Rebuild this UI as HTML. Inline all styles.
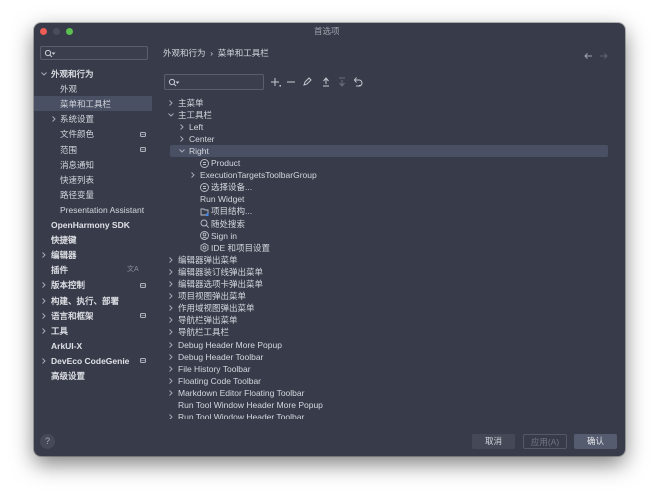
<!DOCTYPE html>
<html><head><meta charset="utf-8"><style>
*{margin:0;padding:0;box-sizing:border-box}
body{width:660px;height:501px;background:#fff;position:relative;overflow:hidden;font-family:"Liberation Sans","Noto Sans CJK SC",sans-serif;font-size:8.5px;color:#d4d7de}
.win{position:absolute;left:34px;top:23px;width:591px;height:433px;background:#383c4a;border-radius:7px;box-shadow:0 8px 22px rgba(0,0,0,.5),0 0 0 1px rgba(0,0,0,.25)}
.dot{position:absolute;top:5px;width:7px;height:7px;border-radius:50%}
.t{position:absolute;white-space:nowrap;line-height:12px}
.chev{position:absolute}
.hl{position:absolute;background:#4a5064;border-radius:2px}
.ic{position:absolute}
.btn{position:absolute;top:411px;height:15px;border-radius:2px;text-align:center;line-height:15px;font-size:8.5px}
</style></head><body>
<div class="win">
<div class="dot" style="left:6px;background:#ee5c56"></div>
<div class="dot" style="left:19px;background:#4a4e5a"></div>
<div class="dot" style="left:32px;background:#5ac04f"></div>
<div class="t" style="left:280px;top:2px;color:#9ea3ad">首选项</div>

<div style="position:absolute;left:6px;top:23px;width:108px;height:14px;border:1px solid #5a5f6e;border-radius:2px;background:#3b3f4d"></div>
<svg class="ic" style="left:10px;top:26px" width="12" height="9"><circle cx="4" cy="4" r="2.6" fill="none" stroke="#c8ccd4" stroke-width="1"/><path d="M6 6l2 2M8.5 4h2l-1 1.2z" stroke="#c8ccd4" fill="#c8ccd4" stroke-width=".9"/></svg>

<div class="hl" style="left:0;top:73px;width:118px;height:15px;border-radius:0"></div>
<div id="left"></div>

<div class="t" style="left:129px;top:24px;color:#d4d7de">外观和行为 &nbsp;›&nbsp; 菜单和工具栏</div>
<svg class="ic" style="left:550px;top:29px" width="30" height="8" fill="none" stroke-width="1"><path d="M1 4h7M3.5 1.5L1 4l2.5 2.5" stroke="#a0a5b0"/><path d="M16 4h7M20.5 1.5L23 4l-2.5 2.5" stroke="#5f6472"/></svg>

<div style="position:absolute;left:130px;top:51px;width:100px;height:16px;border:1px solid #5a5f6e;border-radius:2px;background:#3b3f4d"></div>
<svg class="ic" style="left:134px;top:55px" width="12" height="9"><circle cx="4" cy="4" r="2.6" fill="none" stroke="#c8ccd4" stroke-width="1"/><path d="M6 6l2 2M8.5 4h2l-1 1.2z" stroke="#c8ccd4" fill="#c8ccd4" stroke-width=".9"/></svg>
<svg class="ic" style="left:236px;top:52px" width="100" height="14" fill="none" stroke="#c6cad2" stroke-width="1">
<path d="M5 3v8M1 7h8"/><rect x="9.5" y="10" width="1.5" height="1.5" fill="#c6cad2" stroke="none"/>
<path d="M17 7h8"/>
<path d="M34 10l1-3 4-4 2 2-4 4z"/>
<path d="M53 11h6M56 9V3M53.5 6L56 3l2.5 3"/>
<path d="M69 3h6M72 5v6M69.5 8l2.5 3 2.5-3" stroke="#6a6f7c"/>
<path d="M85 5h4a3 3 0 010 6h-3M86.5 2.5L84.5 5l2 2.5"/><rect x="89" y="10" width="1.5" height="1.5" fill="#c6cad2" stroke="none"/>
</svg>

<div class="hl" style="left:136px;top:122px;width:438px;height:12px"></div>
<div id="right"></div>

<div style="position:absolute;left:6px;top:411px;width:15px;height:15px;border-radius:50%;background:#454958;color:#a6abb5;text-align:center;line-height:15px;font-size:9px">?</div>
<div class="btn" style="left:438px;width:43px;background:#454957;color:#d4d7de">取消</div>
<div class="btn" style="left:489px;width:44px;border:1px solid #545967;color:#737885">应用(A)</div>
<div class="btn" style="left:540px;width:43px;background:#565c70;color:#e4e6ea">确认</div>
</div>
<script>
function chev(x,y,d){return '<svg class="chev" style="left:'+x+'px;top:'+y+'px" width="8" height="8" fill="none" stroke="#a5aab5" stroke-width="1">'+(d=="v"?'<path d="M1.5 2.5L4 5l2.5-2.5"/>':'<path d="M2.5 1.5L5 4 2.5 6.5"/>')+'</svg>';}
var L=[["外观和行为",0,"v",1],["外观",1],["菜单和工具栏",1],["系统设置",1,">"],["文件颜色",1,0,0,"b"],["范围",1,0,0,"b"],["消息通知",1],["快速列表",1],["路径变量",1],["Presentation Assistant",1],["OpenHarmony SDK",0,0,2],["快捷键",0,0,1],["编辑器",0,">",1],["插件",0,0,1,"a"],["版本控制",0,">",1,"b"],["构建、执行、部署",0,">",1],["语言和框架",0,">",1,"b"],["工具",0,">",1],["ArkUI-X",0,0,2],["DevEco CodeGenie",0,">",2,"b"],["高级设置",0,0,1]];
var h="";L.forEach(function(r,i){var y=45+i*15.1;var x=r[1]?26:17;
if(r[2])h+=chev(r[1]?16:6,y+2,r[2]);
h+='<div class="t" style="left:'+x+'px;top:'+y+'px;'+(r[3]==2?'font-weight:bold;color:#dfe1e6':r[3]?'color:#e2e4e9;-webkit-text-stroke:.25px #e2e4e9':'')+'">'+r[0]+'</div>';
if(r[4]=="b")h+='<div style="position:absolute;left:106px;top:'+(y+3.5)+'px;width:6px;height:5px;border:1px solid #b0b4bd;border-radius:1.5px;background:linear-gradient(#383c4a 40%,#b0b4bd 40%,#b0b4bd 55%,#383c4a 55%)"></div>';
if(r[4]=="a")h+='<div class="t" style="left:93px;top:'+y+'px;color:#8a8fa0;font-size:7px">文A</div>';
});document.getElementById("left").innerHTML=h;
var R=[["主菜单",0,">"],["主工具栏",0,"v"],["Left",1,">"],["Center",1,">"],["Right",1,"v"],["Product",2,0,"s"],["ExecutionTargetsToolbarGroup",2,">"],["选择设备...",2,0,"s"],["Run Widget",2],["项目结构...",2,0,"f"],["随处搜索",2,0,"q"],["Sign in",2,0,"u"],["IDE 和项目设置",2,0,"g"],
["编辑器弹出菜单",0,">"],["编辑器装订线弹出菜单",0,">"],["编辑器选项卡弹出菜单",0,">"],["项目视图弹出菜单",0,">"],["作用域视图弹出菜单",0,">"],["导航栏弹出菜单",0,">"],["导航栏工具栏",0,">"],["Debug Header More Popup",0,">"],["Debug Header Toolbar",0,">"],["File History Toolbar",0,">"],["Floating Code Toolbar",0,">"],["Markdown Editor Floating Toolbar",0,">"],["Run Tool Window Header More Popup",0],["Run Tool Window Header Toolbar",0,">"]];
var ic={s:'<circle cx="4.5" cy="4.5" r="4" /><path d="M3 3.5h3M3 5.5h3"/>',f:'<path d="M1 2h3l1 1h3v5H1z"/><rect x="6" y="6.5" width="2.5" height="2.5" fill="#3d8af7" stroke="none"/>',q:'<circle cx="4" cy="4" r="3"/><path d="M6.2 6.2l2.5 2.5"/>',u:'<circle cx="4.5" cy="4.5" r="4"/><circle cx="4.5" cy="3.6" r="1.4"/><path d="M2.2 7.3a3 2 0 014.6 0"/>',g:'<path d="M4.5 .5l3.5 2v4l-3.5 2-3.5-2v-4z"/><circle cx="4.5" cy="4.5" r="1.4"/>'};
h="";R.forEach(function(r,i){var y=73.5+i*12.1;var lv=r[1];var cx=[133,144,155][lv];var tx=[144,155,166][lv];
if(r[2])h+=chev(cx,y+2,r[2]);
if(r[3]){h+='<svg class="ic" style="left:166px;top:'+(y+1.5)+'px" width="10" height="10" fill="none" stroke="#b9bdc6" stroke-width=".9">'+ic[r[3]]+'</svg>';tx=177;}
h+='<div class="t" style="left:'+tx+'px;top:'+y+'px">'+r[0]+'</div>';});
document.getElementById("right").innerHTML='<div style="position:absolute;left:0;top:0;width:591px;height:396px;overflow:hidden">'+h+'</div>';
</script>
</body></html>
